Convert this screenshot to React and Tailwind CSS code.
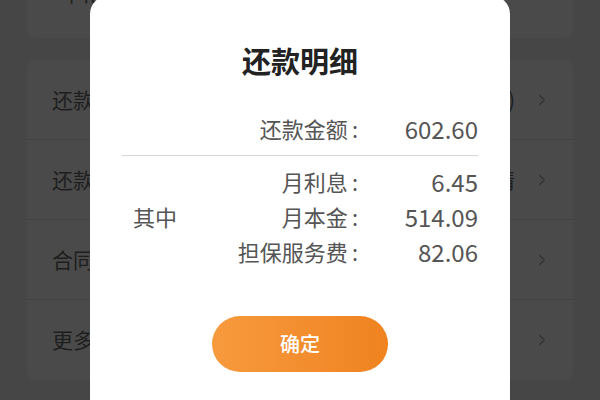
import { ChevronRight } from "lucide-react";

//rows of the dimmed page behind the dialog
const menuRows = [
  { title: "还款计划", extra: "(共12期)" },
  { title: "还款记录", extra: "查看详情" },
  { title: "合同协议", extra: "" },
  { title: "更多服务", extra: "" },
];

//split of the monthly payment
const parts = [
  { label: "月利息", value: "6.45" },
  { label: "月本金", value: "514.09" },
  { label: "担保服务费", value: "82.06" },
];

//label + colon + amount, label column ends at x=358
function AmountRow({ label, value }) {
  return (
    <div className="h-[35px] flex items-center">
      <span className="flex-1 text-right text-[22px]">
        {label}
        <span className="ml-[4px]">:</span>
      </span>
      <span className="w-[120px] text-right text-[24px]">{value}</span>
    </div>
  );
}

export default function App() {
  return (
    <div
      className="relative w-[600px] h-[400px] overflow-hidden bg-[#464646]"
      style={{ fontFamily: '"Noto Sans CJK SC", "Noto Sans", sans-serif' }}
    >
      {/* page behind the overlay */}
      <div className="px-[27px]">
        <div className="h-[38px] bg-[#4a4a4a] rounded-b-lg overflow-hidden">
          <div className="-mt-[22px] pl-[33px] text-[21px] leading-[28px] text-[#1e1e1e]">
            年化利率
          </div>
        </div>
        <div className="mt-[22px] bg-[#4a4a4a] rounded-lg">
          {menuRows.map((row, i) => (
            <div
              key={row.title}
              className={
                "h-[80px] flex items-center pl-[25px] pr-[22px] " +
                (i < menuRows.length - 1 ? "border-b border-[#424242]" : "")
              }
            >
              <span className="text-[21px] text-[#1e1e1e]">{row.title}</span>
              <span className="ml-auto text-[21px] text-[#1e1e1e]">{row.extra}</span>
              <ChevronRight className="ml-[18px] w-[18px] h-[18px] text-[#333]" strokeWidth={1.6} />
            </div>
          ))}
        </div>
      </div>

      {/* dialog */}
      <div className="absolute left-[90px] top-[-4px] w-[420px] h-[420px] bg-white rounded-t-[18px] px-[32px] pt-[44px] text-[#555]">
        <h2 className="text-center text-[29px] leading-[40px] font-bold text-[#222]">还款明细</h2>

        <div className="mt-[31px]">
          <AmountRow label="还款金额" value="602.60" />
        </div>
        <div className="mt-[9px] h-px bg-[#d6d6d6]" />

        <div className="mt-[8px] flex">
          <div className="w-[80px] flex items-center pl-[11px] text-[22px]">其中</div>
          <div className="flex-1">
            {parts.map((p) => (
              <AmountRow key={p.label} label={p.label} value={p.value} />
            ))}
          </div>
        </div>

        <div className="mt-[47px] flex justify-center">
          <button className="w-[176px] h-[56px] rounded-full bg-gradient-to-r from-[#f79a3d] to-[#ef831f] text-white text-[20px] font-medium">
            确定
          </button>
        </div>
      </div>
    </div>
  );
}
